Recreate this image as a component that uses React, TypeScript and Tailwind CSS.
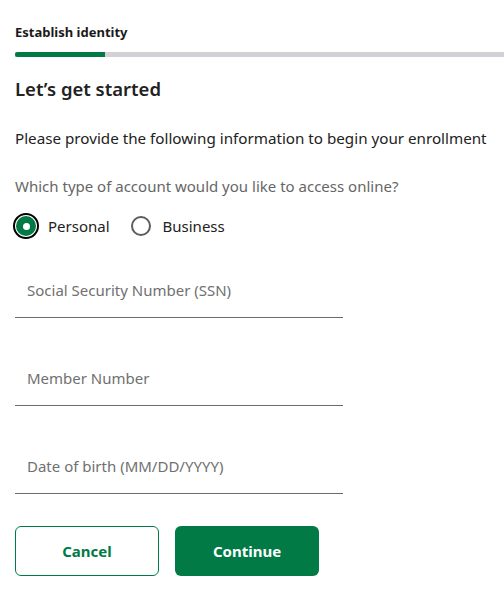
import React, { useState } from "react";

function Radio({ checked, label, onClick }: { checked: boolean; label: string; onClick: () => void }) {
  return (
    <button type="button" onClick={onClick} className="flex items-center h-[26px]">
      {checked ? (
        <span className="flex items-center justify-center w-[26px] h-[26px] rounded-full border-2 border-black -mx-[3px]">
          <span className="flex items-center justify-center w-[20px] h-[20px] rounded-full bg-[#017a45]">
            <span className="w-[7px] h-[7px] rounded-full bg-white" />
          </span>
        </span>
      ) : (
        <span className="w-[20px] h-[20px] rounded-full border-2 border-[#5c5c5c]" />
      )}
      <span className="ml-[12px] text-[15px] leading-[20px] text-[#222]">{label}</span>
    </button>
  );
}

function Field({ label }: { label: string }) {
  return (
    <div className="w-[328px] h-[56px] flex items-center border-b border-[#6b6b6b] px-[12px]">
      <span className="text-[15px] leading-[20px] text-[#707070]">{label}</span>
    </div>
  );
}

export default function App() {
  const [type, setType] = useState("personal");
  return (
    <div className="bg-white min-h-[590px] w-[504px] overflow-hidden px-[15px] font-['Segoe_UI','Noto_Sans',sans-serif] text-[#222]">
      <div className="pt-[24px] text-[13px] font-bold leading-[16px] text-[#1a1a1a]">Establish identity</div>
      <div className="mt-[12px] -mr-[15px] h-[5px] bg-[#d1d1d6] flex">
        <div className="w-[90px] h-full bg-[#017a45] rounded-l-full" />
      </div>
      <h1 className="mt-[20px] text-[18.5px] leading-[24px] font-semibold text-[#222]">Let’s get started</h1>
      <p className="mt-[27px] text-[15.2px] leading-[20px] text-[#222]">
        Please provide the following information to begin your enrollment
      </p>
      <p className="mt-[28px] text-[15px] leading-[20px] text-[#666]">
        Which type of account would you like to access online?
      </p>
      <div className="mt-[17px] flex items-center gap-[21px] pl-[1px]">
        <Radio checked={type === "personal"} label="Personal" onClick={() => setType("personal")} />
        <Radio checked={type === "business"} label="Business" onClick={() => setType("business")} />
      </div>
      <div className="mt-[23px]">
        <Field label="Social Security Number (SSN)" />
      </div>
      <div className="mt-[32px]">
        <Field label="Member Number" />
      </div>
      <div className="mt-[32px]">
        <Field label="Date of birth (MM/DD/YYYY)" />
      </div>
      <div className="mt-[32px] flex gap-[16px]">
        <button type="button" className="w-[144px] h-[50px] rounded-[6px] border border-[#017a45] text-[#017a45] text-[15px] font-bold bg-white">
          Cancel
        </button>
        <button type="button" className="w-[144px] h-[50px] rounded-[6px] bg-[#017a45] text-white text-[15px] font-bold">
          Continue
        </button>
      </div>
    </div>
  );
}
